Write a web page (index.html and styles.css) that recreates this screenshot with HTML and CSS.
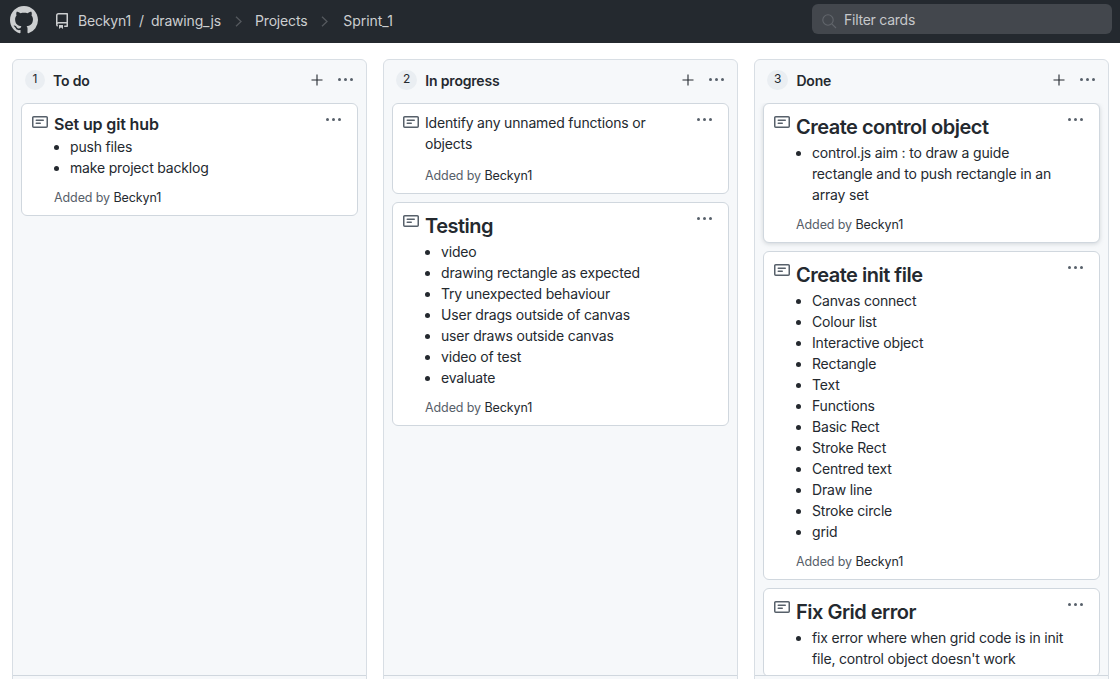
FILE: index.html
```html
<!DOCTYPE html>
<html lang="en">
<head>
    <meta charset="UTF-8">
    <title>Sprint_1</title>
    <link rel="stylesheet" href="styles.css">
</head>
<body>
    <header class="topbar">
        <svg class="logo" viewBox="0 0 16 16" width="28" height="28"><path fill="#ccced0" d="M8 0C3.58 0 0 3.58 0 8c0 3.54 2.29 6.53 5.47 7.59.4.07.55-.17.55-.38 0-.19-.01-.82-.01-1.49-2.01.37-2.53-.49-2.69-.94-.09-.23-.48-.94-.82-1.13-.28-.15-.68-.52-.01-.53.63-.01 1.08.58 1.23.82.72 1.21 1.87.87 2.33.66.07-.52.28-.87.51-1.07-1.78-.2-3.64-.89-3.64-3.95 0-.87.31-1.59.82-2.15-.08-.2-.36-1.02.08-2.12 0 0 .67-.21 2.2.82.64-.18 1.32-.27 2-.27s1.36.09 2 .27c1.53-1.04 2.2-.82 2.2-.82.44 1.1.16 1.92.08 2.12.51.56.82 1.27.82 2.15 0 3.07-1.87 3.75-3.65 3.95.29.25.54.73.54 1.48 0 1.07-.01 1.93-.01 2.2 0 .21.15.46.55.38A8.013 8.013 0 0 0 16 8c0-4.42-3.58-8-8-8z"/></svg>
        <nav class="crumbs">
            <svg class="repo-icon" viewBox="0 0 16 16" width="16" height="16"><path fill="#ccced0" d="M2 2.5A2.5 2.5 0 0 1 4.5 0h8.75a.75.75 0 0 1 .75.75v12.5a.75.75 0 0 1-.75.75h-2.5a.75.75 0 0 1 0-1.5h1.75v-2h-8a1 1 0 0 0-.714 1.7.75.75 0 1 1-1.072 1.05A2.495 2.495 0 0 1 2 11.5Zm10.5-1h-8a1 1 0 0 0-1 1v6.708A2.486 2.486 0 0 1 4.5 9h8ZM5 12.25a.25.25 0 0 1 .25-.25h3.5a.25.25 0 0 1 .25.25v3.25a.25.25 0 0 1-.4.2l-1.45-1.087a.249.249 0 0 0-.3 0L5.4 15.7a.25.25 0 0 1-.4-.2Z"/></svg>
            <span class="crumb">Beckyn1</span>
            <span class="slash">/</span>
            <span class="crumb">drawing_js</span>
            <svg class="chevron" viewBox="0 0 7 11" width="7" height="11"><path d="M1 .8 6 5.5 1 10.2" fill="none" stroke="#55595e" stroke-width="1.3"/></svg>
            <span class="crumb">Projects</span>
            <svg class="chevron" viewBox="0 0 7 11" width="7" height="11"><path d="M1 .8 6 5.5 1 10.2" fill="none" stroke="#55595e" stroke-width="1.3"/></svg>
            <span class="crumb crumb-last">Sprint_1</span>
        </nav>
        <div class="filter">
            <svg viewBox="0 0 16 16" width="16" height="16"><circle cx="7" cy="7" r="5.2" fill="none" stroke="#62666c" stroke-width="1.1"/><path d="M10.8 10.8 15 15" stroke="#62666c" stroke-width="1.1"/></svg>
            <span>Filter cards</span>
        </div>
    </header>

    <main class="board">
        <section class="column">
            <div class="col-head">
                <span class="count">1</span>
                <h2>To do</h2>
                <span class="plus"><svg viewBox="0 0 16 16" width="16" height="16"><path d="M8 2.5v11M2.5 8h11" stroke="#24292f" stroke-width="1.1"/></svg></span>
                <span class="dots"><i></i><i></i><i></i></span>
            </div>
            <div class="cards">
                <article class="card">
                    <svg class="note" viewBox="0 0 16 16" width="16" height="16"><path fill="#57606a" d="M0 3.75C0 2.784.784 2 1.75 2h12.5c.966 0 1.75.784 1.75 1.75v8.5A1.75 1.75 0 0 1 14.25 14H1.75A1.75 1.75 0 0 1 0 12.25Zm1.75-.25a.25.25 0 0 0-.25.25v8.5c0 .138.112.25.25.25h12.5a.25.25 0 0 0 .25-.25v-8.5a.25.25 0 0 0-.25-.25ZM3.5 6.25a.75.75 0 0 1 .75-.75h7a.75.75 0 0 1 0 1.5h-7a.75.75 0 0 1-.75-.75Zm.75 2.25h4a.75.75 0 0 1 0 1.5h-4a.75.75 0 0 1 0-1.5Z"/></svg>
                    <span class="dots card-dots"><i></i><i></i><i></i></span>
                    <div class="body">
                        <h3 class="small">Set up git hub</h3>
                        <ul>
                            <li>push files</li>
                            <li>make project backlog</li>
                        </ul>
                        <p class="added">Added by <b>Beckyn1</b></p>
                    </div>
                </article>
            </div>
            <div class="col-foot"></div>
        </section>

        <section class="column">
            <div class="col-head">
                <span class="count">2</span>
                <h2>In progress</h2>
                <span class="plus"><svg viewBox="0 0 16 16" width="16" height="16"><path d="M8 2.5v11M2.5 8h11" stroke="#24292f" stroke-width="1.1"/></svg></span>
                <span class="dots"><i></i><i></i><i></i></span>
            </div>
            <div class="cards">
                <article class="card">
                    <svg class="note" viewBox="0 0 16 16" width="16" height="16"><path fill="#57606a" d="M0 3.75C0 2.784.784 2 1.75 2h12.5c.966 0 1.75.784 1.75 1.75v8.5A1.75 1.75 0 0 1 14.25 14H1.75A1.75 1.75 0 0 1 0 12.25Zm1.75-.25a.25.25 0 0 0-.25.25v8.5c0 .138.112.25.25.25h12.5a.25.25 0 0 0 .25-.25v-8.5a.25.25 0 0 0-.25-.25ZM3.5 6.25a.75.75 0 0 1 .75-.75h7a.75.75 0 0 1 0 1.5h-7a.75.75 0 0 1-.75-.75Zm.75 2.25h4a.75.75 0 0 1 0 1.5h-4a.75.75 0 0 1 0-1.5Z"/></svg>
                    <span class="dots card-dots"><i></i><i></i><i></i></span>
                    <div class="body">
                        <p class="plain">Identify any unnamed functions or objects</p>
                        <p class="added after-plain">Added by <b>Beckyn1</b></p>
                    </div>
                </article>
                <article class="card">
                    <svg class="note" viewBox="0 0 16 16" width="16" height="16"><path fill="#57606a" d="M0 3.75C0 2.784.784 2 1.75 2h12.5c.966 0 1.75.784 1.75 1.75v8.5A1.75 1.75 0 0 1 14.25 14H1.75A1.75 1.75 0 0 1 0 12.25Zm1.75-.25a.25.25 0 0 0-.25.25v8.5c0 .138.112.25.25.25h12.5a.25.25 0 0 0 .25-.25v-8.5a.25.25 0 0 0-.25-.25ZM3.5 6.25a.75.75 0 0 1 .75-.75h7a.75.75 0 0 1 0 1.5h-7a.75.75 0 0 1-.75-.75Zm.75 2.25h4a.75.75 0 0 1 0 1.5h-4a.75.75 0 0 1 0-1.5Z"/></svg>
                    <span class="dots card-dots"><i></i><i></i><i></i></span>
                    <div class="body">
                        <h3>Testing</h3>
                        <ul>
                            <li>video</li>
                            <li>drawing rectangle as expected</li>
                            <li>Try unexpected behaviour</li>
                            <li>User drags outside of canvas</li>
                            <li>user draws outside canvas</li>
                            <li>video of test</li>
                            <li>evaluate</li>
                        </ul>
                        <p class="added">Added by <b>Beckyn1</b></p>
                    </div>
                </article>
            </div>
            <div class="col-foot"></div>
        </section>

        <section class="column">
            <div class="col-head">
                <span class="count">3</span>
                <h2>Done</h2>
                <span class="plus"><svg viewBox="0 0 16 16" width="16" height="16"><path d="M8 2.5v11M2.5 8h11" stroke="#24292f" stroke-width="1.1"/></svg></span>
                <span class="dots"><i></i><i></i><i></i></span>
            </div>
            <div class="cards">
                <article class="card raised">
                    <svg class="note" viewBox="0 0 16 16" width="16" height="16"><path fill="#57606a" d="M0 3.75C0 2.784.784 2 1.75 2h12.5c.966 0 1.75.784 1.75 1.75v8.5A1.75 1.75 0 0 1 14.25 14H1.75A1.75 1.75 0 0 1 0 12.25Zm1.75-.25a.25.25 0 0 0-.25.25v8.5c0 .138.112.25.25.25h12.5a.25.25 0 0 0 .25-.25v-8.5a.25.25 0 0 0-.25-.25ZM3.5 6.25a.75.75 0 0 1 .75-.75h7a.75.75 0 0 1 0 1.5h-7a.75.75 0 0 1-.75-.75Zm.75 2.25h4a.75.75 0 0 1 0 1.5h-4a.75.75 0 0 1 0-1.5Z"/></svg>
                    <span class="dots card-dots"><i></i><i></i><i></i></span>
                    <div class="body">
                        <h3>Create control object</h3>
                        <ul>
                            <li>control.js aim : to draw a guide rectangle and to push rectangle in an array set</li>
                        </ul>
                        <p class="added">Added by <b>Beckyn1</b></p>
                    </div>
                </article>
                <article class="card">
                    <svg class="note" viewBox="0 0 16 16" width="16" height="16"><path fill="#57606a" d="M0 3.75C0 2.784.784 2 1.75 2h12.5c.966 0 1.75.784 1.75 1.75v8.5A1.75 1.75 0 0 1 14.25 14H1.75A1.75 1.75 0 0 1 0 12.25Zm1.75-.25a.25.25 0 0 0-.25.25v8.5c0 .138.112.25.25.25h12.5a.25.25 0 0 0 .25-.25v-8.5a.25.25 0 0 0-.25-.25ZM3.5 6.25a.75.75 0 0 1 .75-.75h7a.75.75 0 0 1 0 1.5h-7a.75.75 0 0 1-.75-.75Zm.75 2.25h4a.75.75 0 0 1 0 1.5h-4a.75.75 0 0 1 0-1.5Z"/></svg>
                    <span class="dots card-dots"><i></i><i></i><i></i></span>
                    <div class="body">
                        <h3>Create init file</h3>
                        <ul>
                            <li>Canvas connect</li>
                            <li>Colour list</li>
                            <li>Interactive object</li>
                            <li>Rectangle</li>
                            <li>Text</li>
                            <li>Functions</li>
                            <li>Basic Rect</li>
                            <li>Stroke Rect</li>
                            <li>Centred text</li>
                            <li>Draw line</li>
                            <li>Stroke circle</li>
                            <li>grid</li>
                        </ul>
                        <p class="added">Added by <b>Beckyn1</b></p>
                    </div>
                </article>
                <article class="card">
                    <svg class="note" viewBox="0 0 16 16" width="16" height="16"><path fill="#57606a" d="M0 3.75C0 2.784.784 2 1.75 2h12.5c.966 0 1.75.784 1.75 1.75v8.5A1.75 1.75 0 0 1 14.25 14H1.75A1.75 1.75 0 0 1 0 12.25Zm1.75-.25a.25.25 0 0 0-.25.25v8.5c0 .138.112.25.25.25h12.5a.25.25 0 0 0 .25-.25v-8.5a.25.25 0 0 0-.25-.25ZM3.5 6.25a.75.75 0 0 1 .75-.75h7a.75.75 0 0 1 0 1.5h-7a.75.75 0 0 1-.75-.75Zm.75 2.25h4a.75.75 0 0 1 0 1.5h-4a.75.75 0 0 1 0-1.5Z"/></svg>
                    <span class="dots card-dots"><i></i><i></i><i></i></span>
                    <div class="body">
                        <h3>Fix Grid error</h3>
                        <ul>
                            <li>fix error where when grid code is in init file, control object doesn't work</li>
                        </ul>
                    </div>
                </article>
            </div>
            <div class="col-foot"></div>
        </section>
    </main>
</body>
</html>
```

FILE: styles.css
```css
*{
    box-sizing: border-box;
    margin:0;
    padding:0;
}
html,body{
    height:100%;
    overflow:hidden;
}
body{
    background:#fff;
    color:#24292f;
    font-family:Inter,"Liberation Sans",sans-serif;
    font-size:14px;
    line-height:21px;
    letter-spacing:-0.18px;
}
.topbar{
    height:43px;
    background:#24292f;
    display:flex;
    align-items:center;
    padding:0 8px;
    color:#ccced0;
}
.logo{
    margin:-3px 0 0 2px;
    flex:none;
}
.crumbs{
    display:flex;
    align-items:center;
    margin:-2px 0 0 16px;
    flex:1;
}
.repo-icon{
    margin:1px 8px 0 0;
}
.slash{
    margin:0 7px 0 8px;
}
.chevron{
    margin:1px 13px 0 14px;
}
.crumb-last{
    margin-left:2px;
    letter-spacing:-0.05px;
}
.filter{
    width:300px;
    height:30px;
    margin-top:-5px;
    background:#43474d;
    border-radius:6px;
    display:flex;
    align-items:center;
    gap:7px;
    padding:0 8px 0 9px;
    color:#c6c8ca;
    letter-spacing:-0.25px;
}
.filter svg{
    margin-top:3px;
}
.board{
    display:flex;
    gap:16px;
    padding:16px 11px 0 12px;
}
.column{
    width:355px;
    flex:none;
    background:#f6f8fa;
    border:1px solid #d8dee4;
    border-radius:6px;
}
.col-head{
    height:43px;
    display:flex;
    align-items:center;
    padding:0 11px 3px 12px;
}
.count{
    min-width:20px;
    height:20px;
    padding:0 7px;
    border-radius:10px;
    background:#eaeef2;
    font-size:12px;
    line-height:18px;
    text-align:center;
    flex:none;
    letter-spacing:0;
}
.col-head h2{
    flex:1;
    font-size:14px;
    font-weight:600;
    margin-left:8px;
    padding-top:1px;
}
.plus{
    display:flex;
    margin:0 13px 0 0;
}
.dots{
    display:flex;
    gap:3px;
    width:17px;
}
.dots i{
    width:3px;
    height:3px;
    border-radius:50%;
    background:#57606a;
}
.col-head .dots{
    margin-top:-2px;
}
.cards{
    height:572px;
    padding:0 8px;
    overflow:hidden;
}
.col-foot{
    height:30px;
    border-top:1px solid #d0d7de;
}
.card{
    position:relative;
    background:#fff;
    border:1px solid #d0d7de;
    border-radius:6px;
    margin-bottom:8px;
    padding:8px 10px 7px 32px;
}
.raised{
    box-shadow:0 1px 4px rgba(140,149,159,.35);
}
.note{
    position:absolute;
    left:10px;
    top:10px;
}
.card-dots{
    position:absolute;
    right:14px;
    top:14px;
}
.body h3{
    font-size:20px;
    font-weight:600;
    line-height:25px;
    margin:3px 0 2px;
    letter-spacing:-0.5px;
}
.body h3.small{
    font-size:16px;
    line-height:20px;
    margin:2px 0 2px;
    letter-spacing:-0.15px;
}
.body ul{
    padding:0 16px;
}
.plain{
    padding-right:30px;
}
.added{
    font-size:12.5px;
    letter-spacing:-0.1px;
    color:#57606a;
    margin-top:9px;
}
.after-plain{
    margin-top:11px;
}
.added b{
    font-weight:400;
    color:#24292f;
}
```
